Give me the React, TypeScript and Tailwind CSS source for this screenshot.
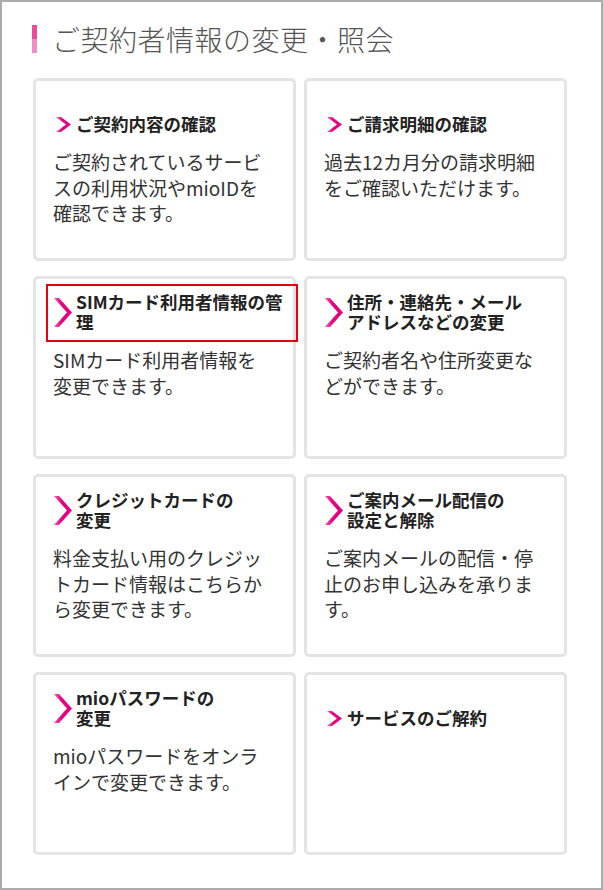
import React from 'react';

type Item = {
  title: string[];
  body: string[];
  mark?: boolean;
};

const items: Item[] = [
  {
    title: ['ご契約内容の確認'],
    body: ['ご契約されているサービ', 'スの利用状況やmioIDを', '確認できます。'],
  },
  {
    title: ['ご請求明細の確認'],
    body: ['過去12カ月分の請求明細', 'をご確認いただけます。'],
  },
  {
    title: ['SIMカード利用者情報の管', '理'],
    body: ['SIMカード利用者情報を', '変更できます。'],
    mark: true,
  },
  {
    title: ['住所・連絡先・メール', 'アドレスなどの変更'],
    body: ['ご契約者名や住所変更な', 'どができます。'],
  },
  {
    title: ['クレジットカードの', '変更'],
    body: ['料金支払い用のクレジッ', 'トカード情報はこちらか', 'ら変更できます。'],
  },
  {
    title: ['ご案内メール配信の', '設定と解除'],
    body: ['ご案内メールの配信・停', '止のお申し込みを承りま', 'す。'],
  },
  {
    title: ['mioパスワードの', '変更'],
    body: ['mioパスワードをオンラ', 'インで変更できます。'],
  },
  {
    title: ['サービスのご解約'],
    body: [],
  },
];

function Chevron({ tall }: { tall: boolean }) {
  const w = tall ? 18 : 15;
  const h = tall ? 29 : 15;
  const t = 5;
  const id = tall ? 'chv-t' : 'chv-s';
  return (
    <svg width={w} height={h} viewBox={`0 0 ${w} ${h}`}>
      <defs>
        <linearGradient id={id} x1="0" y1="0" x2="1" y2="0">
          <stop offset="0" stopColor="#f05aa8" />
          <stop offset="0.45" stopColor="#e4007f" />
          <stop offset="1" stopColor="#e4007f" />
        </linearGradient>
      </defs>
      <polygon
        points={`0,0 ${t},0 ${w},${h / 2} ${t},${h} 0,${h} ${w - t},${h / 2}`}
        fill={`url(#${id})`}
      />
    </svg>
  );
}

function Card({ item }: { item: Item }) {
  const tall = item.title.length > 1;
  return (
    <div className="relative h-[183px] rounded-[5px] border-[3px] border-[#e4e4e4] bg-white px-[17px] pt-[13px]">
      {/* heading sits on the bottom of a fixed two-line box */}
      <div className="flex h-[40px] items-end">
        <div className="flex items-center">
          <div className="flex w-[20px] shrink-0 justify-center">
            <Chevron tall={tall} />
          </div>
          <h3 className="ml-[3px] text-[17.5px] font-bold leading-[20px] text-[#222]">
            {item.title.map((line) => (
              <span key={line} className="block whitespace-nowrap">
                {line}
              </span>
            ))}
          </h3>
        </div>
      </div>
      <p className="mt-[15px] text-[19px] leading-[25.5px] text-[#333]">
        {item.body.map((line) => (
          <span key={line} className="block whitespace-nowrap">
            {line}
          </span>
        ))}
      </p>
      {item.mark && (
        <div className="absolute left-[10px] top-[5px] h-[58px] w-[252px] border-2 border-[#e60012]" />
      )}
    </div>
  );
}

export default function App() {
  return (
    <div
      className="h-[890px] w-[603px] overflow-hidden border-2 border-[#ababab] bg-white"
      style={{ fontFamily: '"Noto Sans CJK JP", "Noto Sans", sans-serif' }}
    >
      {/* Title */}
      <div className="flex items-center pl-[30px] pt-[23px]">
        <div className="flex h-[28px] w-[5px] flex-col">
          <div className="h-1/2 bg-[#ea4c9c]" />
          <div className="h-1/2 bg-[#f28ec3]" />
        </div>
        <h2 className="ml-[15px] text-[28px] font-light leading-[28px] tracking-[0.5px] text-[#555]">
          ご契約者情報の変更・照会
        </h2>
      </div>

      {/* Menu cards */}
      <div className="mt-[25px] grid grid-cols-[263px_263px] gap-x-[8px] gap-y-[15px] pl-[31px]">
        {items.map((item) => (
          <Card key={item.title.join('')} item={item} />
        ))}
      </div>
    </div>
  );
}
